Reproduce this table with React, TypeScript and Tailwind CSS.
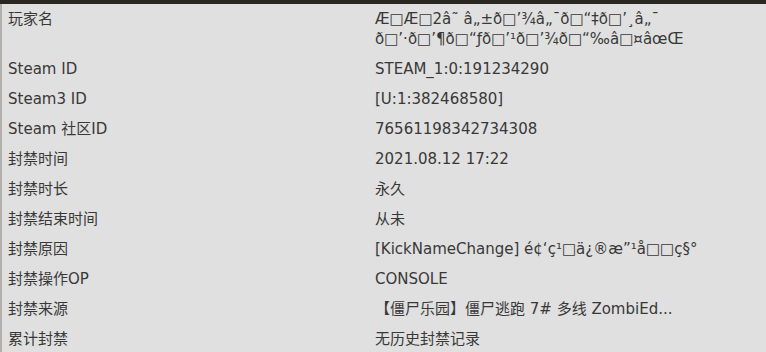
import React from 'react';

interface BanRow {
  label: string;
  value: string;
}

const rows: BanRow[] = [
  {
    label: '玩家名',
    value:
      'Æ\u25A1Æ\u25A12â˜\u00A0â„±ð\u25A1’¾â„¯ð\u25A1“‡ð\u25A1’¸â„¯ ð\u25A1’·ð\u25A1’¶ð\u25A1“ƒð\u25A1’¹ð\u25A1’¾ð\u25A1“‰â\u25A1¤âœŒ',
  },
  { label: 'Steam ID', value: 'STEAM_1:0:191234290' },
  { label: 'Steam3 ID', value: '[U:1:382468580]' },
  { label: 'Steam 社区ID', value: '76561198342734308' },
  { label: '封禁时间', value: '2021.08.12 17:22' },
  { label: '封禁时长', value: '永久' },
  { label: '封禁结束时间', value: '从未' },
  {
    label: '封禁原因',
    value: '[KickNameChange] é¢‘ç¹\u25A1ä¿®æ”¹å\u25A1\u25A1ç§°',
  },
  { label: '封禁操作OP', value: 'CONSOLE' },
  { label: '封禁来源', value: '【僵尸乐园】僵尸逃跑 7# 多线 ZombiEd...' },
  { label: '累计封禁', value: '无历史封禁记录' },
];

const App: React.FC = () => {
  return (
    <div className="w-[766px] h-[352px] overflow-hidden bg-[#2a2622] pt-[4px]">
      <div
        className="h-full border-l-2 border-[#b3afab] bg-[#e0e0e0] text-[15px] leading-[20px] text-[#383838]"
        style={{ fontFamily: '"DejaVu Sans", "Noto Sans CJK SC", sans-serif' }}
      >
        {rows.map((row) => (
          <div key={row.label} className="grid grid-cols-[367px_1fr] py-[5px]">
            <div className="pl-[6px] pr-2">{row.label}</div>
            <div className="pl-[6px] pr-2 break-words">{row.value}</div>
          </div>
        ))}
      </div>
    </div>
  );
};

export default App;
